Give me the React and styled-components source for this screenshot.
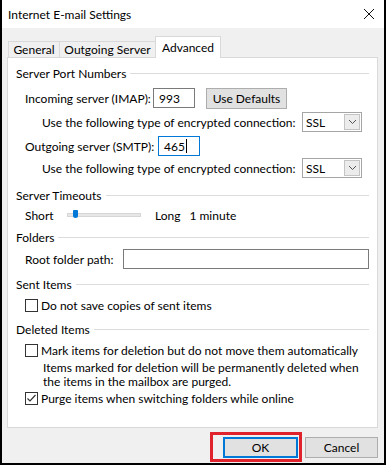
import React from "react";
import styled, { createGlobalStyle } from "styled-components";

const GlobalStyle = createGlobalStyle`
  body {
    margin: 0;
    font-family: Lato, "Liberation Sans", sans-serif;
    font-size: 12px;
    color: #000;
  }
`;

const Window = styled.div`
  width: 386px;
  height: 465px;
  box-sizing: border-box;
  border: 2px solid #000;
  border-top: none;
  background: #f0f0f0;
  display: flex;
  flex-direction: column;
  white-space: nowrap;
`;

const TitleBar = styled.div`
  height: 28px;
  background: #fff;
  display: flex;
  align-items: center;
  justify-content: space-between;
  padding: 0 9px 0 6px;
  font-size: 12px;
`;

const Body = styled.div`
  padding: 8px 6px 0 5px;
  display: flex;
  flex-direction: column;
`;

const TabStrip = styled.div`
  display: flex;
  align-items: flex-end;
  height: 22px;
  margin-bottom: -1px;
  padding-left: 1px;
  position: relative;
  z-index: 1;
`;

const Tab = styled.div`
  width: ${(p) => p.$w}px;
  height: ${(p) => (p.$active ? 22 : 17)}px;
  box-sizing: border-box;
  border: 1px solid #d9d9d9;
  border-bottom: ${(p) => (p.$active ? "none" : "1px solid #d9d9d9")};
  margin-left: ${(p) => (p.$first ? 0 : -1)}px;
  background: ${(p) => (p.$active ? "#fff" : "#f0f0f0")};
  display: flex;
  align-items: ${(p) => (p.$active ? "flex-start" : "center")};
  padding-top: ${(p) => (p.$active ? 3 : 0)}px;
  justify-content: center;
`;

const Panel = styled.div`
  height: 371px;
  box-sizing: border-box;
  background: #fff;
  border: 1px solid #d9d9d9;
  padding: 7px 8px 0 8px;
  display: flex;
  flex-direction: column;
`;

const GroupHeading = styled.div`
  height: 16px;
  margin-top: ${(p) => p.$mt || 0}px;
  display: flex;
  align-items: center;
  gap: 4px;
  &::after {
    content: "";
    flex: 1;
    border-top: 1px solid #dcdcdc;
  }
`;

const Row = styled.div`
  height: ${(p) => p.$h || 20}px;
  margin-top: ${(p) => p.$mt || 0}px;
  padding-left: ${(p) => p.$indent || 9}px;
  display: flex;
  align-items: center;
`;

const Label = styled.span`
  width: ${(p) => (p.$w ? `${p.$w}px` : "auto")};
  margin-left: ${(p) => p.$ml || 0}px;
  flex-shrink: 0;
`;

const TextBox = styled.div`
  width: ${(p) => p.$w}px;
  height: 20px;
  box-sizing: border-box;
  border: 1px solid ${(p) => (p.$focus ? "#0078d7" : "#7a7a7a")};
  background: #fff;
  display: flex;
  align-items: center;
  padding-left: 5px;
`;

const Caret = styled.span`
  display: inline-block;
  width: 1px;
  height: 14px;
  background: #000;
  margin-left: 1px;
`;

const Button = styled.div`
  width: ${(p) => p.$w}px;
  height: ${(p) => p.$h || 21}px;
  margin-left: ${(p) => p.$ml || 0}px;
  box-sizing: border-box;
  border: ${(p) => (p.$default ? "2px solid #0078d7" : "1px solid #adadad")};
  background: #e1e1e1;
  display: flex;
  align-items: center;
  justify-content: center;
`;

const Select = styled.div`
  width: 60px;
  height: 20px;
  box-sizing: border-box;
  border: 1px solid #a5a5a5;
  background: #fff;
  display: flex;
  align-items: center;
  justify-content: space-between;
  padding: 1px 1px 1px 3px;
`;

const SelectArrow = styled.div`
  width: 16px;
  height: 16px;
  box-sizing: border-box;
  border: 1px solid #c4c4c4;
  background: #ececec;
  display: flex;
  align-items: center;
  justify-content: center;
`;

const Slider = styled.div`
  position: relative;
  width: 74px;
  height: 4px;
  box-sizing: border-box;
  background: #e7e7e7;
  border: 1px solid #d6d6d6;
`;

const Thumb = styled.div`
  position: absolute;
  left: 5px;
  top: -4px;
  width: 5px;
  height: 8px;
  border-radius: 1px 1px 3px 3px;
  background: #0078d7;
`;

const CheckRow = styled.label`
  height: 16px;
  margin-top: ${(p) => p.$mt || 0}px;
  padding-left: 9px;
  display: flex;
  align-items: center;
  gap: 3px;
`;

const CheckBox = styled.span`
  width: 13px;
  height: 13px;
  box-sizing: border-box;
  border: 1px solid #333;
  background: #fff;
  display: flex;
  align-items: center;
  justify-content: center;
`;

const Note = styled.div`
  margin-top: ${(p) => p.$mt || 0}px;
  padding-left: 27px;
  line-height: 14px;
`;

const Footer = styled.div`
  display: flex;
  justify-content: flex-end;
  gap: 7px;
  padding-top: 9px;
`;

const Highlight = styled.div`
  position: relative;
  &::after {
    content: "";
    position: absolute;
    left: -13px;
    top: -5px;
    right: -4px;
    bottom: -4px;
    border: 3px solid #e0222c;
  }
`;

function Chevron() {
  return (
    <svg width="9" height="6" viewBox="0 0 9 6">
      <path d="M1 1 L4.5 4.5 L8 1" fill="none" stroke="#555" strokeWidth="1" />
    </svg>
  );
}

function Check({ checked }) {
  return (
    <CheckBox>
      {checked && (
        <svg width="11" height="11" viewBox="0 0 11 11">
          <path d="M1.5 5.5 L4 8 L9.5 2" fill="none" stroke="#333" strokeWidth="1.2" />
        </svg>
      )}
    </CheckBox>
  );
}

function EncRow({ mt }) {
  return (
    <Row $mt={mt} $indent={26}>
      <Label $w={260}>Use the following type of encrypted connection:</Label>
      <Select>
        <span>SSL</span>
        <SelectArrow>
          <Chevron />
        </SelectArrow>
      </Select>
    </Row>
  );
}

export default function App() {
  return (
    <>
      <GlobalStyle />
      <Window>
        <TitleBar>
          <span>Internet E-mail Settings</span>
          <svg width="12" height="12" viewBox="0 0 12 12">
            <path d="M1 1 L11 11 M11 1 L1 11" stroke="#111" strokeWidth="1" />
          </svg>
        </TitleBar>
        <Body>
          <TabStrip>
            <Tab $w={52} $first>General</Tab>
            <Tab $w={97}>Outgoing Server</Tab>
            <Tab $w={66} $active>Advanced</Tab>
          </TabStrip>
          <Panel>
            <GroupHeading>Server Port Numbers</GroupHeading>
            <Row $h={22} $mt={6}>
              <Label $w={128}>Incoming server (IMAP):</Label>
              <TextBox $w={42}>993</TextBox>
              <Button $w={81} $ml={11}>Use Defaults</Button>
            </Row>
            <EncRow mt={3} />
            <Row $mt={4}>
              <Label $w={133}>Outgoing server (SMTP):</Label>
              <TextBox $w={42} $focus>
                465<Caret />
              </TextBox>
            </Row>
            <EncRow mt={2} />

            <GroupHeading $mt={9}>Server Timeouts</GroupHeading>
            <Row $mt={2}>
              <Label $w={42}>Short</Label>
              <Slider>
                <Thumb />
              </Slider>
              <Label $ml={14}>Long</Label>
              <Label $ml={9}>1 minute</Label>
            </Row>

            <GroupHeading $mt={4}>Folders</GroupHeading>
            <Row $h={22} $mt={3}>
              <Label $w={98}>Root folder path:</Label>
              <TextBox $w={247} />
            </Row>

            <GroupHeading $mt={6}>Sent Items</GroupHeading>
            <CheckRow $mt={5}>
              <Check />
              Do not save copies of sent items
            </CheckRow>

            <GroupHeading $mt={8}>Deleted Items</GroupHeading>
            <CheckRow $mt={5}>
              <Check />
              Mark items for deletion but do not move them automatically
            </CheckRow>
            <Note $mt={3}>
              Items marked for deletion will be permanently deleted when
              <br />
              the items in the mailbox are purged.
            </Note>
            <CheckRow $mt={1}>
              <Check checked />
              Purge items when switching folders while online
            </CheckRow>
          </Panel>
          <Footer>
            <Highlight>
              <Button $w={75} $default>OK</Button>
            </Highlight>
            <Button $w={73}>Cancel</Button>
          </Footer>
        </Body>
      </Window>
    </>
  );
}
